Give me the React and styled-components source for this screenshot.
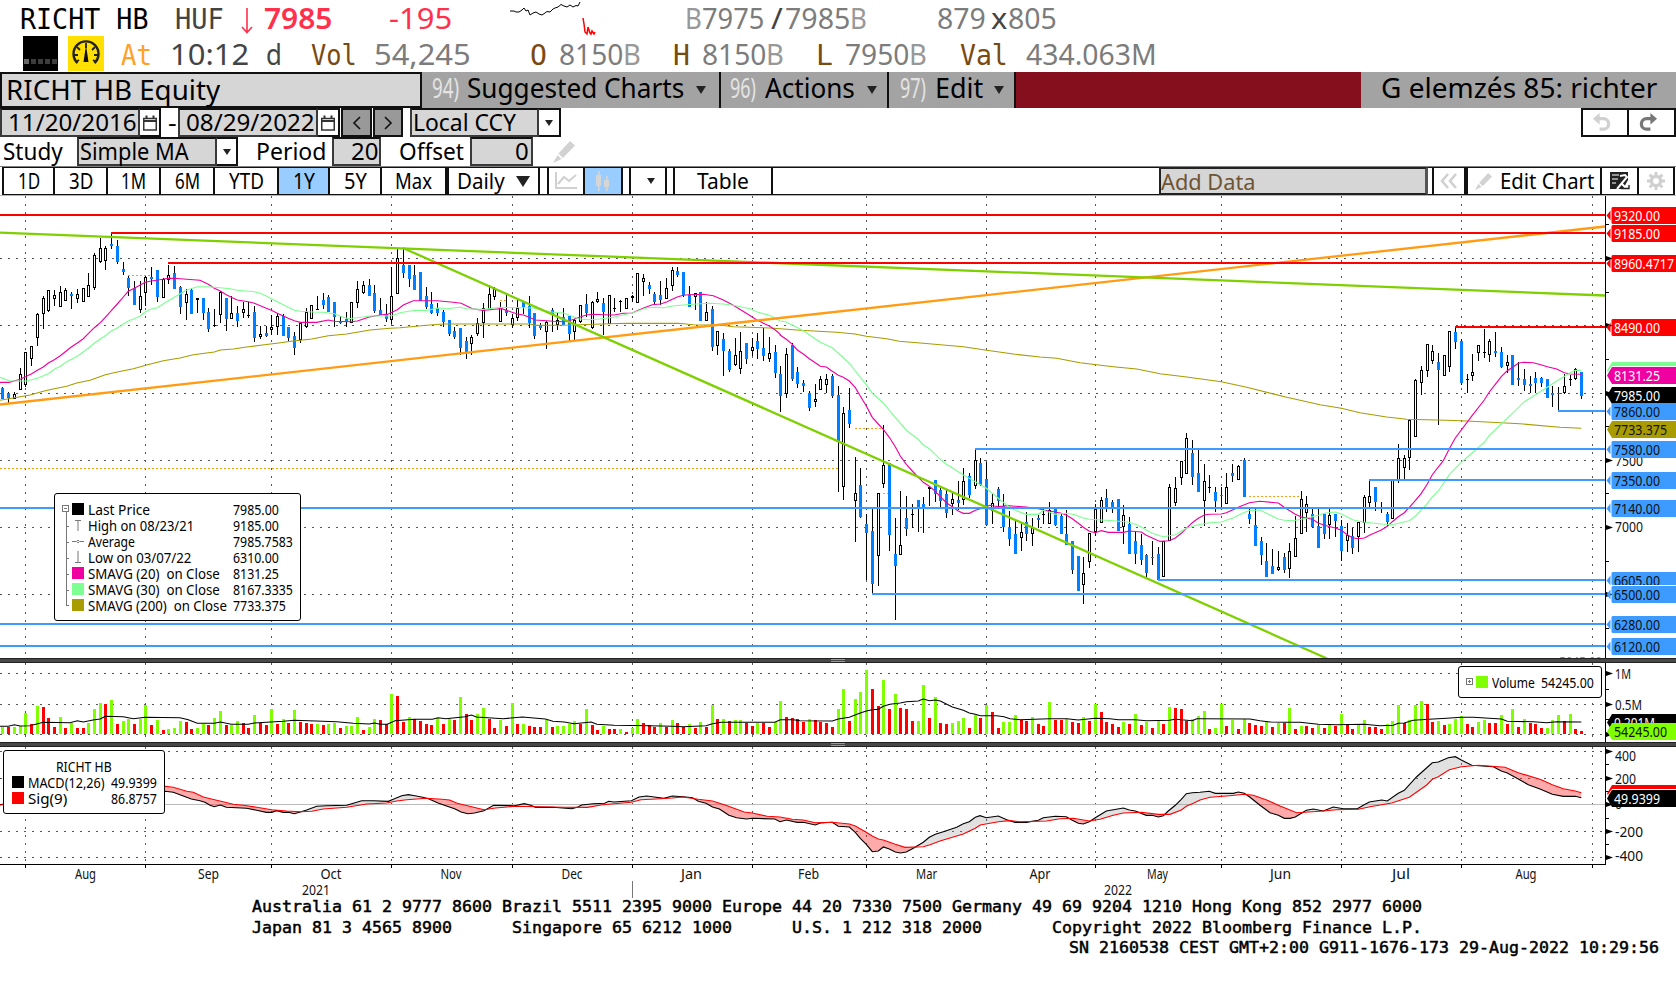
import React, { useLayoutEffect, useRef, useState } from "react";
import styled, { createGlobalStyle, css } from "styled-components";

const UI = '"Noto Sans", "Open Sans", sans-serif';
const MONO = '"DejaVu Sans Mono", "Liberation Mono", monospace';
const C = {
  red: "#ff0000", blue: "#3d9bff", candle: "#0080ff", lime: "#7fd000", orange: "#ff9c14",
  pink: "#f000a0", mint: "#7dff91", olive: "#a89c00", field: "#d6d6d6", menu: "#a3a3a3",
};

const Global = createGlobalStyle`
  html, body { margin: 0; padding: 0; background: #fff; overflow: hidden; }
  * { box-sizing: border-box; }
  svg { display: block; }
`;

const FitBox = styled.span`
  display: inline-block;
  flex: none;
  width: ${(p) => p.$w}px;
  margin-left: ${(p) => p.$gap || 0}px;
  white-space: pre;
  color: ${(p) => p.$color || "inherit"};
  font-weight: ${(p) => (p.$bold ? 600 : "inherit")};
  ${(p) => p.$mono && css`font-family: ${MONO}; font-size: 0.97em;`}
`;
const FitInner = styled.span`
  display: inline-block;
  transform-origin: 0 50%;
`;

/* Condenses a label horizontally so that it fills exactly `w` pixels. */
function Fit({ w, gap, color, bold, mono, children }) {
  const ref = useRef(null);
  const [scale, setScale] = useState(1);
  useLayoutEffect(() => {
    setScale(w / ref.current.offsetWidth);
  }, [w, children]);
  return (
    <FitBox $w={w} $gap={gap} $color={color} $bold={bold} $mono={mono}>
      <FitInner ref={ref} style={{ transform: `scaleX(${scale})` }}>{children}</FitInner>
    </FitBox>
  );
}

const Screen = styled.main`
  width: 1676px;
  height: 991px;
  display: flex;
  flex-direction: column;
  background: #fff;
  color: #000;
  font-family: ${UI};
  overflow: hidden;
`;
const QuoteRow = styled.div`
  display: flex;
  flex: none;
  align-items: baseline;
  height: 36px;
  font-size: 29px;
  line-height: ${(p) => p.$lh}px;
  padding-left: ${(p) => p.$pad}px;
`;
const IconSlot = styled.span`
  flex: none;
  align-self: flex-start;
  width: ${(p) => p.$w}px;
  height: 36px;
  margin-left: ${(p) => p.$gap || 0}px;
`;

const MenuBar = styled.nav`
  display: flex;
  flex: none;
  height: 36px;
  font-size: 27px;
  background: #850f1c;
`;
const SecurityField = styled.div`
  width: 422px;
  border: 2px solid #111;
  background: ${C.field};
  padding-left: 4px;
  font-size: 28px;
  line-height: 30px;
`;
const MenuItem = styled.div`
  display: flex;
  width: ${(p) => p.$w}px;
  padding-left: ${(p) => p.$pad}px;
  background: ${C.menu};
  border-right: ${(p) => (p.$last ? 0 : 2)}px solid #111;
  line-height: 31px;
`;
const Caret = styled.span`
  flex: none;
  align-self: center;
  width: 0;
  height: 0;
  margin-left: ${(p) => p.$gap || 0}px;
  border: ${(p) => p.$s || 5}px solid transparent;
  border-top: ${(p) => (p.$s || 5) * 1.7}px solid #222;
  border-bottom: 0;
`;

const FormRow = styled.div`
  display: flex;
  flex: none;
  align-items: stretch;
  height: 29px;
  font-size: 24px;
  line-height: 27px;
`;
const Field = styled.div`
  display: flex;
  flex: none;
  width: ${(p) => p.$w}px;
  margin-left: ${(p) => p.$gap || 0}px;
  padding-left: ${(p) => p.$pad || 1}px;
  background: ${C.field};
  border: 2px solid #3a3a3a;
  border-top-color: #111;
  line-height: 23px;
`;
const SideButton = styled.div`
  display: flex;
  flex: none;
  align-items: center;
  justify-content: center;
  width: ${(p) => p.$w}px;
  margin-left: ${(p) => p.$gap || 0}px;
  background: ${(p) => p.$bg || "#fff"};
  border: 2px solid #111;
  border-left-width: ${(p) => (p.$joined ? 0 : 2)}px;
`;
const Spacer = styled.div`flex: 1;`;

const ToolRow = styled.div`
  display: flex;
  flex: none;
  height: 30px;
  border-top: 1px solid #808080;
  border-bottom: 1px solid #b4b4b4;
  padding-left: 2px;
  font-size: 21px;
  line-height: 26px;
`;
const Tool = styled.div`
  display: flex;
  flex: none;
  align-items: center;
  justify-content: center;
  width: ${(p) => p.$w}px;
  background: ${(p) => (p.$on ? "#99ccff" : "#fff")};
  border: 1px solid #111;
  border-right-width: 2px;
  border-left-width: ${(p) => (p.$start ? 2 : 0)}px;
`;
const ToolGap = styled.div`
  flex: none;
  width: ${(p) => p.$w}px;
  border-top: 1px solid #111;
  border-bottom: 1px solid #111;
`;
const AddData = styled.div`
  flex: none;
  width: 269px;
  background: ${C.field};
  border: 2px solid #222;
  border-right: 3px solid #555;
  line-height: 25px;
  font-size: 22px;
`;

const Pane = styled.section`
  position: relative;
  flex: none;
  height: ${(p) => p.$h}px;
`;
const Splitter = styled.div`
  flex: none;
  display: flex;
  justify-content: center;
  align-items: center;
  height: 5px;
  background: #484848;
  border-top: 1px solid #222;
  border-bottom: 1px solid #222;
`;
const Grip = styled.span`
  width: 14px;
  height: 3px;
  border-top: 1px solid #999;
  border-bottom: 1px solid #999;
`;
const Legend = styled.div`
  position: absolute;
  left: ${(p) => p.$x}px;
  top: ${(p) => p.$y}px;
  width: ${(p) => p.$w}px;
  height: ${(p) => p.$h}px;
  padding: ${(p) => p.$pad};
  background: #fff;
  border: 1px solid #000;
  border-radius: 3px;
  font-size: 14px;
  line-height: 16px;
`;
const LegendRow = styled.div`
  display: flex;
  align-items: center;
  height: 16px;
`;
const Swatch = styled.span`
  flex: none;
  width: 12px;
  height: 12px;
  margin: -2px 4px 0 ${(p) => p.$gap || 0}px;
  background: ${(p) => p.$c};
`;
const Expander = styled.span`
  flex: none;
  width: 7px;
  height: 7px;
  margin-top: -3px;
  background: linear-gradient(#777, #777) center / 3px 1px no-repeat,
    ${(p) => (p.$plus ? "linear-gradient(#777,#777) center / 1px 3px no-repeat" : "none")};
  border: 1px solid #777;
`;
const Footer = styled.footer`
  flex: none;
  height: 91px;
  margin-top: -3px;
  font: 16.62px/20.5px ${MONO};
  -webkit-text-stroke: 0.5px #000;
  white-space: pre;
`;
const FooterLine = styled.div`padding-left: ${(p) => p.$pad}px;`;

/* ---- market data, in thirds of a pixel relative to each block's origin:
   x, kind, wick top, body top, body bottom, wick bottom ---- */
const CANDLES = [
  [0, 195, `7b576,578,613,613 25b591,595,610,627 43w590,597,613,613 61w519,537,586,586 76w470,471,570,575 94w453,454,491,513 112w354,356,428,453 130w303,310,358,402 145w285,286,348,350 163w285,300,311,333 181w272,291,335,335 196w279,286,317,319 214b291,297,303,342 232w282,297,311,323 250w280,280,322,322 265w234,270,305,305 283w174,180,278,285 301w128,159,200,204 316w153,159,198,224 334b114,147,153,162 352b135,153,201,207 370b201,222,232,240 385b242,249,279,302 403b258,279,329,329 421w258,303,345,354 436w243,246,293,333 454b216,246,252,270 472b225,225,305,321 490w250,252,308,308 505w210,240,255,267 523b213,234,282,282 541b273,276,336,357 559w282,297,323,375 574b279,284,357,357 592w309,310,315,354 610b309,309,354,375 625b339,350,402,411 643w342,390,391,396 661w288,291,360,384 679b309,309,372,408 694w303,355,371,371 712b333,354,378,396 730w321,342,353,369 745w321,360,361,369 763b333,350,429,441 781w393,416,426,432 799b393,414,423,426 814w360,396,406,420 832w354,364,396,420 850b357,363,423,423 865b396,396,429,438 883b411,423,459,480 901w381,384,434,444 919w339,352,397,399 934w330,331,371,371 952w303,342,346,346 970b293,315,330,342 985b300,306,350,350 1003b321,321,366,396 1021b363,378,384,387 1039b350,372,381,396 1054w321,322,383,383 1072w258,282,323,339 1090w258,270,293,297 1108b252,270,302,302 1123b270,293,347,354 1141b309,345,359,359 1159b327,357,372,381 1174w216,303,374,387 1192w162,190,296,296 1210b162,210,234,249 1228b210,210,252,276 1243b210,240,285,285`],
  [400, 195, `61b231,231,317,317 79b276,303,336,341 94b291,327,354,357 112b324,339,353,363 130b345,351,381,396 148b375,375,417,423 163b396,408,426,432 181b399,399,459,480 199b426,438,474,492 214w420,427,446,480 232w369,384,416,423 250w324,340,385,429 268w270,297,341,342 283w276,283,306,315 301w321,336,380,380 319b300,345,354,363 337w357,370,391,399 352w315,340,368,378 370b318,318,336,357 388b303,333,384,399 403b354,354,423,432 421b384,391,399,405 439w378,382,410,462 457b339,345,359,411 472w354,376,389,405 490b339,366,390,390 508b363,363,417,438 523w372,376,412,438 541w330,331,380,384 559b297,327,354,366 577w317,322,400,403 592w291,313,320,324 610b309,324,350,420 628w300,301,388,388 643w309,339,341,351 661w316,317,318,350 679w309,310,341,341 697w300,302,308,321 712w234,235,323,323 730w237,250,260,303 748b261,270,282,297 763b291,297,321,327 781b258,300,315,329 799w249,280,311,312 817w216,225,272,287 832b216,228,240,246 850b231,231,300,305 868b273,300,335,335 886w294,295,305,345 901b291,291,377,377 919w321,352,377,378 937b333,342,456,468 952w408,409,452,480 970b414,432,468,543 988b462,468,525,530 1006w429,481,509,513 1021w411,469,521,537 1039b444,444,492,507 1057w429,457,469,483 1072b414,438,462,492 1090b399,459,483,498 1108w426,475,491,501 1126b450,471,534,549 1141b513,537,603,651 1159w459,478,596,609 1177b444,450,552,558 1192b516,531,567,579 1210b555,564,573,592 1228b588,594,639,648 1246w567,613,620,636`],
  [780, 300, `121w228,238,269,270 139w222,238,254,279 157b222,228,288,294 175b258,285,423,576 190w321,340,562,600 208b264,330,372,384 226w471,580,602,726 241b504,555,651,655 259b642,672,699,840 277b627,693,852,880 295w579,580,769,858 310w375,496,551,564 328b490,490,705,753 346b654,762,798,960 361w573,736,765,765 379b588,654,687,708 397w612,642,643,684 415b600,600,625,696 430b591,612,624,699 448w561,562,566,618 466b540,540,582,606 481b558,570,603,621 499b570,582,640,655 517w579,598,613,645 535b543,600,609,630 550w504,544,599,615 568b519,528,585,594 586w450,481,557,567 601b474,489,555,558 619b486,537,675,678 637w582,610,634,672 655b561,567,603,625 670b582,618,681,696 688b633,681,717,738 706b663,702,762,762 724w669,697,715,753 739b636,666,702,723 757w654,684,701,738 775b645,654,660,684 790w624,643,644,672 808w606,629,671,672 826b624,627,675,678 844b640,648,702,702 859b630,702,735,735 877b723,723,810,822 895b768,768,873,873 910w771,820,854,912 928w699,700,785,804 946w612,626,695,708 964w591,601,668,668 979b567,594,624,636 997b600,606,624,639 1015b597,597,693,693 1030w615,646,682,732 1048b651,672,762,762 1066b693,723,762,792 1084b702,735,780,795 1099b762,765,819,831 1117b723,771,774,795 1135b741,762,840,840 1150w723,724,830,830`],
  [1160, 300, `28w552,562,724,724 46w531,565,608,618 64w483,484,533,555 79w399,415,521,522 97b420,459,531,555 115b450,519,576,576 133w492,544,602,678 148w525,562,563,579 166b561,575,603,636 184b561,585,588,624 199w519,562,611,612 217b492,519,528,546 235w495,499,539,540 253b474,480,591,591 268b624,642,657,672 286b624,675,738,738 304b711,723,765,795 319b729,783,831,831 337b747,798,822,822 355w753,802,811,813 373b759,771,810,819 388w729,754,806,834 406w648,715,770,770 424w573,598,701,702 439w588,613,638,696 457b627,642,681,684 475b624,678,744,744 493b642,642,702,717 508w627,646,674,717 526b642,642,663,711 544b660,678,753,783 562w669,706,724,756 577b684,708,744,762 595w666,667,712,756 613w585,592,668,699 628w543,589,608,621 646b561,561,606,633 664w606,622,623,640 682b636,642,666,678 697w540,541,656,656 715w432,475,542,549 733w465,475,503,537 748w357,360,475,510 766w237,240,410,411 784w198,211,248,285 802w132,133,212,230 817w135,154,182,192 835b159,186,210,375 853w165,166,227,227 868w93,94,200,215 886b80,96,126,147 904b117,123,249,255 922w222,237,239,279 937w162,217,227,242 955w135,136,160,182 973w87,156,157,174 988w117,124,166,186 1006b96,153,159,171 1024b141,156,201,204 1042w165,187,199,219 1057b165,165,255,255 1075b186,234,240,258 1093b207,237,255,273 1111b228,252,258,279 1126b216,234,249,279 1144b231,234,249,261 1162b237,237,294,294 1177b258,279,285,321 1195b261,279,282,333 1213w222,259,280,282 1231w225,237,239,258 1246w204,206,238,240 1264b216,216,288,297`],
].flatMap(([ox, oy, s]) =>
  s.split(" ").map((t) => {
    const [, x, kind, rest] = t.match(/^(\d+)([bw])(.*)$/);
    const [wt, bt, bb, wb] = rest.split(",").map((v) => Math.round(oy + v / 3));
    return { x: ox + Math.round((x - 1) / 3), up: kind === "w", wt, bt, bb, wb };
  })
);

const VOLUMES = [
  [762, `g741 r741 g741 g739 g699 r732 g678 r681 r714 r741 g711 r744 g729 r744 r744 g729 g687 g669 r672 g660 r732 g723 g717 r732 g717 g675 r735 g720 r750 g747 g744 g723 r726 r747 g744 g732 r735 g714 g693 r735 g735 g723 r729 r744 g705 r729 r735 g687 r732 g717 r729 g690 r726 r729 r732 g732 r735 g732 g729 r744 g738 g738 g711 r750 g741 g717 r720 r732 g642 r648 r726 g711 r718`],
  [282, `r243 r252 r255 g234 r252 g237 r240 g171 r222 r240 g222 g204 r237 r264 g240 r258 g189 r252 g252 r258 r261 r261 g240 r261 g258 g258 g252 g243 r252 g207 r255 r270 g258 r267 r267 g267 r276 g264 g237 r249 r255 r261 g249 r261 g240 r249 r261 g252 r264 g246 r261 g195 r237 g237 r243 g240 g240 r249 r258 g249 r249 r261 g246`],
  [252, `g153 r201 r204 r207 r216 g207 r210 r216 r219 r231 g177 g117 r213 g147 g126 g60 r117 r168 g90 r177 g132 r174 r177 r213 g213 g105 r204 g141 r219 r222 g219 g213 g204 r234 g195 r204 g165 r186 r234 g216 g216 g195 r210 r213 g201 r222 r228 g156 r210 r210 g207 r216 r219 g201 r213 g162 r186 r216 r222 r231 g216 r222 g192 r225 g216 r234 g213 r222 g171 r174 r177 r213 g207 g198 g183 r237 g234 g162 r228 g210 r237 g207 r219 r225 r228 g213 r231 g219 r219 g174 r237 g228 r228 r234 g225 r234 g222 r228 g192 r222 r237 g225 g210 r231 r231 r237 g222 g213 g165 r219 g210 g165 g153 r162 r216 g213 r225 g222 g207 g198 r222 r231 g216 g210 r219 r219 g195 r222 g177 r231 g207 r219 r222 r234 g234 g210 g195 r213 g192 r237 r243`],
].flatMap(([base, s]) => s.split(" ").map((t) => ({ up: t[0] === "g", h: Math.round((base - t.slice(1)) / 3) })));

/* Decodes "x,y x,y ..." blocks given an origin and scale per block. */
const curve = (blocks) =>
  blocks.flatMap(([ox, oy, s, sx = 3]) =>
    s.split(" ").map((p) => {
      const [x, y] = p.split(",").map(Number);
      return [ox + x / sx, oy + y / 3];
    })
  );
const NARROW = 1568 / 600;
const pts = (a) => a.map(([x, y]) => `${x.toFixed(1)},${y.toFixed(1)}`).join(" ");

const SMA20 = curve([
  [0, 195, "0,562 27,562 45,557 61,553 76,545 94,537 112,526 130,516 145,504 163,494 181,482 196,470 214,456 232,444 250,431 265,416 283,398 301,383 316,367 334,347 352,327 370,306 385,289 403,280 421,270 436,262 454,258 475,255 505,250 523,250 560,253 600,256 625,268 643,280 661,288 679,299 694,307 712,315 745,320 763,325 781,332 799,340 814,346 832,355 850,363 865,370 883,377 901,382 950,382 985,375 1003,379 1054,380 1072,378 1090,372 1108,366 1141,360 1165,357 1192,344 1210,330"],
  [400, 195, "40,317 112,317 160,322 184,325 199,332 217,341 250,346 283,343 305,341 325,348 352,357 370,360 388,367 406,375 439,377 460,379 490,380 517,374 541,366 559,360 580,358 610,359 643,360 670,355 697,354 715,346 733,338 757,329 781,327 800,321 817,313 832,306 850,301 868,299 910,298 940,302 970,315 1000,331 1039,355 1072,376 1108,393 1126,405 1141,418"],
  [780, 300, "0,105 19,118 37,133 52,150 70,162 88,176 106,188 121,199 139,201 157,214 175,226 190,232 208,243 226,263 241,288 259,318 277,352 295,372 310,388 328,412 346,440 361,468 379,493 397,513 415,532 430,547 448,559 466,574 481,590 499,608 517,620 535,633 550,640 568,640 586,631 601,626 630,616 655,620 680,617 706,619 739,621 775,626 790,630 826,636 844,640 859,645 877,656 895,670 910,682 928,694 946,698 964,692 985,697 1030,697 1048,693 1084,696 1099,706 1117,714 1135,722"],
  [1160, 300, "0,724 28,722 46,714 64,700 79,685 97,668 115,655 133,645 148,643 184,642 199,638 235,622 268,608 300,604 355,609 373,622 406,643 424,651 457,658 475,669 493,676 526,684 544,691 562,704 577,713 595,716 613,714 630,705 664,690 682,679 697,665 715,650 733,638 748,622 766,602 784,580 802,552 817,524 850,482 868,446 886,414 937,346 973,300 988,276 1006,253 1024,230 1040,214 1060,200 1075,190 1090,187 1120,188 1145,195 1162,200 1190,207 1213,218 1231,222 1264,223"],
]);
const SMA30 = curve([
  [0, 195, "0,547 12,551 27,557 45,558 80,558 112,550 145,536 163,523 181,514 200,500 232,484 265,460 283,445 301,432 316,422 334,408 352,399 385,378 403,371 421,363 436,350 454,342 472,338 490,326 523,307 541,296 559,286 592,275 625,275 661,278 690,281 712,286 763,290 781,295 799,303 832,320 865,337 883,346 901,349 940,351 970,352 1003,356 1021,364 1045,371 1090,366 1108,363 1170,363 1192,357"],
  [400, 195, "0,353 45,346 80,346 115,339 140,341 180,337 200,341 250,343 300,337 400,339 425,345 460,352 490,354 515,363 535,371 565,374 600,372 640,367 679,358 697,354 730,342 748,337 790,338 817,333 850,330 890,327 930,325 970,327 1000,331 1050,341 1072,351 1108,361 1126,370"],
  [780, 300, "0,63 15,65 37,75 70,92 121,127 157,143 190,173 208,190 226,213 259,254 277,280 310,309 346,353 379,390 397,405 415,418 430,435 448,446 481,478 499,493 517,503 550,525 568,535 586,545 619,565 655,595 688,622 706,631 739,643 775,643 790,631 808,637 826,643 859,640 885,644 910,654 928,658 1000,662 1048,667 1066,673 1084,681 1099,690 1117,700"],
  [1160, 300, "0,707 10,710 46,704 79,685 115,674 148,668 184,666 217,655 250,638 268,632 300,630 330,645 355,657 373,661 400,662 439,655 475,646 493,640 526,636 544,642 580,660 610,666 664,672 697,674 748,662 770,645 802,610 817,591 835,573 868,524 904,487 937,458 973,427 988,406 1024,372 1060,338 1093,305 1130,282 1162,262 1195,240 1231,218 1246,211 1264,211"],
]);
const SMA200 = curve([
  [0, 195, "0,616 40,609 90,600 130,589 163,581 200,574 230,564 270,556 316,539 352,531 400,521 440,510 490,497 540,489 580,479 643,471 661,465 700,462 740,456 781,451 830,445 880,438 935,432 985,422 1040,417 1110,405 1170,400"],
  [400, 195, "0,398 80,391 130,387 390,387 405,391 520,390 580,388 680,385 835,385 880,389 960,390 1000,395 1110,399"],
  [780, 300, "0,86 60,91 170,97 225,102 259,109 320,116 358,124 430,130 550,140 620,151 700,162 780,171 830,175 900,188 1000,200 1070,207"],
  [1160, 300, "0,221 80,231 184,245 260,262 380,292 480,314 544,325 600,338 680,351 740,358 860,361 920,363 1080,371 1200,382 1264,385"],
]);
const VOLMA = curve([
  [0, 480, "0,739 25,739 43,734 60,738 90,737 130,727 210,728 232,722 250,726 283,719 301,717 316,709 370,710 400,716 436,712 540,713 565,719 592,730 643,730 661,726 694,733 745,733 763,729 850,724 883,721 1010,725 1060,730 1108,732 1123,729 1141,733 1162,733 1185,722 1243,718"],
  [220, 640, "555,238 570,233 590,236 640,230 657,225 670,231 740,236 790,231 850,237 870,244 900,246 925,251 970,246 985,253 1030,256 1120,257 1182,259 1211,260 1270,257 1287,251 1310,247 1450,247", NARROW],
  [780, 650, "1,209 40,209 60,212 157,213 175,207 208,202 241,189 259,183 277,179 295,178 310,169 330,163 361,159 379,155 415,153 430,147 448,152 466,150 481,153 517,171 550,181 568,189 586,193 601,197 650,197 672,200 690,206 720,209 808,206 860,206 895,210 946,205 990,206 1015,209 1066,209 1099,212 1168,211 1186,208 1237,212 1250,206"],
  [1200, 650, "0,206 150,207 180,212 210,216 260,217 300,217 355,223 410,224 493,223 540,227 580,226 595,220 613,219 640,211 700,207 740,205 784,202 820,202 904,207 922,214 1000,215 1040,218 1070,215 1144,216"],
]);
const MACD = curve([
  [0, 480, "0,974 495,934 520,937 550,948 574,957 600,962 615,967 630,976 643,980 661,975 679,982 740,985 770,991 799,997 815,997 830,992 850,997 865,997 883,1001 901,996 920,990 950,979 980,977 1040,976 1055,971 1085,962 1120,962 1165,964 1180,958 1205,947 1225,944"],
  [220, 640, "509,467 530,472 545,476 570,489 590,497 613,506 630,516 648,521 665,519 690,512 715,496 770,497 795,491 812,496 825,502 870,502 920,506 935,501 945,495 975,491 1005,490 1016,484 1030,486 1075,482 1095,471 1115,468 1135,471 1160,475 1182,468 1211,470 1235,473 1250,484 1270,490 1287,501 1305,507 1330,526 1350,533 1376,537 1391,535 1450,537", NARROW],
  [780, 650, "0,515 19,510 52,517 70,517 106,525 121,519 157,517 175,529 208,531 226,547 241,565 259,583 277,605 295,603 310,591 328,597 346,606 361,609 379,606 400,595 430,577 448,562 466,553 490,545 530,532 550,521 568,515 586,502 600,497 619,503 655,498 680,509 705,517 739,517 775,511 790,503 826,499 859,500 877,511 895,520 910,522 928,515 946,503 979,483 1030,474 1048,480 1066,483 1099,496 1117,496 1135,501 1150,497 1165,483 1186,466 1204,448 1219,431 1237,428"],
  [1200, 650, "0,427 28,424 46,430 100,430 115,426 133,430 150,442 180,466 210,488 235,496 253,505 270,505 286,501 319,481 340,477 370,483 400,471 430,476 472,476 490,466 508,456 545,450 562,453 595,430 613,421 650,380 697,338 715,336 745,323 766,320 784,330 815,346 880,350 904,363 922,369 955,387 985,404 1020,417 1057,433 1090,439 1126,439 1144,443"],
]);
const SIGNAL = curve([
  [0, 480, "0,975 495,919 520,922 560,934 580,937 610,951 650,961 700,973 730,976 770,982 815,989 860,993 900,995 935,994 970,987 1040,982 1100,972 1160,969 1190,963 1220,959"],
  [220, 640, "540,475 580,478 600,480 620,490 660,501 690,509 720,504 770,499 900,502 960,502 1000,494 1075,487 1100,479 1140,477 1182,474 1209,471 1250,478 1287,483 1320,495 1370,516 1391,519 1430,529", NARROW],
  [780, 650, "0,501 37,508 70,510 106,518 157,517 208,522 226,528 259,547 277,558 295,567 310,570 346,583 375,592 430,590 450,584 480,573 550,552 570,542 586,535 601,525 655,515 688,512 720,515 800,513 840,506 880,505 928,513 960,508 1000,496 1030,489 1084,487 1135,493 1170,493 1204,480 1219,469 1240,460"],
  [1200, 650, "0,450 30,442 80,438 133,433 160,436 200,450 240,468 270,480 290,488 360,484 410,479 475,478 510,470 575,459 628,442 680,405 697,388 715,380 748,359 784,350 835,346 915,352 955,368 1024,389 1057,404 1090,416 1126,423 1144,428"],
]);

const yAt = (line, x) => {
  for (let i = 1; i < line.length; i++) {
    if (line[i][0] >= x) {
      const [x0, y0] = line[i - 1];
      const [x1, y1] = line[i];
      return y0 + ((y1 - y0) * (x - x0)) / (x1 - x0 || 1);
    }
  }
  return line[line.length - 1][1];
};
const band = (pick) => {
  const top = [], bottom = [];
  for (let x = 1; x <= 1581; x += 2) {
    const m = yAt(MACD, x), s = yAt(SIGNAL, x);
    top.push([x, s]);
    bottom.unshift([x, pick(m, s)]);
  }
  return pts([...top, ...bottom]);
};

const MONTHS = [25, 145, 271, 391, 512, 632, 752, 866, 986, 1095, 1221, 1341, 1461, 1592];
const AXIS = 1605;

function Grid({ y0, y1, rows }) {
  return (
    <g stroke="#555" strokeWidth="1" strokeDasharray="2 6" shapeRendering="crispEdges">
      {MONTHS.map((x) => <line key={x} x1={x + 0.5} x2={x + 0.5} y1={y0} y2={y1} />)}
      {rows.map((y) => <line key={y} x1="0" x2={AXIS} y1={y + 0.5} y2={y + 0.5} />)}
    </g>
  );
}

function AxisTicks({ y0, y1, major, minor }) {
  return (
    <g fill="#000" shapeRendering="crispEdges">
      <rect x={AXIS} y={y0} width="1" height={y1 - y0} />
      {minor.map((y) => <rect key={y} x={AXIS} y={y} width="4" height="1" />)}
      {major.map((y) => <path key={y} d={`M1606 ${y - 2}L1613 ${y + 0.5}L1606 ${y + 3}Z`} shapeRendering="auto" />)}
    </g>
  );
}

function AxisText({ y, w, x = 1614, fill = "#111", anchor, children }) {
  return (
    <text x={x} y={y} fontFamily={UI} fontSize="13.8" fill={fill} textAnchor={anchor} textLength={w} lengthAdjust="spacingAndGlyphs">{children}</text>
  );
}

function Tag({ y, fill, ink = "#111", h = 17, wide, w = 46, children }) {
  return (
    <g>
      {wide
        ? <path d={`M1607 ${y + 8.5}L1612 ${y}H1676V${y + h}H1612Z`} fill={fill} />
        : <path d={`M1612.5 ${y}H1676V${y + h}H1612.5L1611.5 ${y + h - 1}V${y + 1}ZM1606.5 ${y + 8.5}L1610.5 ${y + 3.5}V${y + 13.5}Z`} fill={fill} />}
      {children && (
        <>
          <clipPath id={`tag${y}`}><rect x="1606" y={y} width="70" height={h} /></clipPath>
          <g clipPath={`url(#tag${y})`}><AxisText y={y + 14} w={w} fill={ink}>{children}</AxisText></g>
        </>
      )}
    </g>
  );
}

const LEVELS = [
  [C.red, 0, 215], [C.red, 111, 233], [C.red, 168, 263], [C.red, 1455, 327],
  [C.blue, 0, 508], [C.blue, 0, 624], [C.blue, 0, 646], [C.blue, 975, 449],
  [C.blue, 1369, 480], [C.blue, 1558, 411], [C.blue, 1158, 580], [C.blue, 872, 594],
];
const GAPS = [[128, 150, 275], [500, 507, 300], [855, 883, 428], [0, 838, 468], [883, 889, 493], [1249, 1299, 496]];

function PriceChart() {
  return (
    <svg width="1676" height="462" viewBox="0 196 1676 462">
      <Grid y0={196} y1={658} rows={[258, 325, 393, 460, 527, 594]} />
      <g shapeRendering="crispEdges">
        {GAPS.map(([a, b, y]) => <line key={y} x1={a} x2={b} y1={y + 0.5} y2={y + 0.5} stroke={C.orange} strokeDasharray="2 2" />)}
        {CANDLES.map((c) => (
          <g key={c.x}>
            <rect x={c.x} y={c.wt} width="1" height={Math.max(1, c.wb - c.wt)} fill="#000" />
            <rect x={c.x - 1} y={c.bt} width="3" height={Math.max(1, c.bb - c.bt)} fill={c.up ? "#000" : C.candle} />
            {c.up && c.bb - c.bt > 2 && <rect x={c.x} y={c.bt + 1} width="1" height={c.bb - c.bt - 2} fill="#fff" />}
          </g>
        ))}
      </g>
      <g fill="none" strokeWidth="1.15">
        <polyline points={pts(SMA200)} stroke={C.olive} />
        <polyline points={pts(SMA20)} stroke={C.pink} />
        <polyline points={pts(SMA30)} stroke={C.mint} />
      </g>
      <g strokeWidth="2.3">
        <line x1="0" y1="404.5" x2="1605" y2="226.5" stroke={C.orange} />
        <line x1="0" y1="232.7" x2="1605" y2="295.5" stroke={C.lime} />
        <line x1="403" y1="248" x2="1327" y2="658.5" stroke={C.lime} />
      </g>
      <g strokeWidth="2">
        {LEVELS.map(([c, x, y]) => <line key={y} x1={x} x2={AXIS} y1={y} y2={y} stroke={c} />)}
      </g>
      <AxisTicks y0={196} y1={658} major={[258, 325, 393, 460, 527, 594]} minor={[224, 292, 359, 426, 493, 561, 628]} />
      <AxisText y={466} w={28} x={1615}>7500</AxisText>
      <AxisText y={532} w={28} x={1615}>7000</AxisText>
      <Tag y={207} fill={C.red} ink="#fff">9320.00</Tag>
      <Tag y={225} fill={C.red} ink="#fff">9185.00</Tag>
      <Tag y={255} fill={C.red} ink="#fff" w={60}>8960.4717</Tag>
      <Tag y={319} fill={C.red} ink="#fff">8490.00</Tag>
      <Tag y={362} fill={C.mint} wide />
      <path d="M1606 375L1612 366.5H1676" fill="none" stroke="#fff" />
      <Tag y={367} fill={C.pink} ink="#fff" wide>8131.25</Tag>
      <Tag y={387} fill="#000" ink="#fff" wide>7985.00</Tag>
      <Tag y={403} fill={C.blue}>7860.00</Tag>
      <Tag y={421} fill={C.olive} wide w={53}>7733.375</Tag>
      <Tag y={441} fill={C.blue}>7580.00</Tag>
      <Tag y={472} fill={C.blue}>7350.00</Tag>
      <Tag y={500} fill={C.blue}>7140.00</Tag>
      <Tag y={572} fill={C.blue} h={13}>6605.00</Tag>
      <Tag y={586} fill={C.blue}>6500.00</Tag>
      <Tag y={616} fill={C.blue}>6280.00</Tag>
      <Tag y={638} fill={C.blue}>6120.00</Tag>
      <AxisText y={667} w={43} x={1559} fill="#18a8f0">5945.00</AxisText>
    </svg>
  );
}

function VolumeChart() {
  return (
    <svg width="1676" height="79" viewBox="0 663 1676 79">
      <Grid y0={663} y1={742} rows={[673, 704, 734]} />
      <g shapeRendering="crispEdges">
        {VOLUMES.map((v, i) => CANDLES[i] && (
          <rect key={i} x={CANDLES[i].x - 1} y={734 - v.h} width="3" height={v.h} fill={v.up ? "#80ff00" : C.red} />
        ))}
      </g>
      <polyline points={pts(VOLMA)} fill="none" stroke="#000" strokeWidth="1.1" />
      <AxisTicks y0={663} y1={742} major={[673, 704, 734]} minor={[689, 719]} />
      <AxisText y={679} w={16} x={1615}>1M</AxisText>
      <AxisText y={710} w={27} x={1615}>0.5M</AxisText>
      <Tag y={714} fill="#000" ink="#fff" wide w={41}>0.201M</Tag>
      <Tag y={723} fill="#80ff00" wide w={53}>54245.00</Tag>
    </svg>
  );
}

const MONTH_LABELS = [["Aug", 85.5], ["Sep", 208.5], ["Oct", 331], ["Nov", 451], ["Dec", 572], ["Jan", 691.5], ["Feb", 808.5], ["Mar", 926.5], ["Apr", 1040], ["May", 1157.5], ["Jun", 1280.5], ["Jul", 1401], ["Aug", 1526]];

function MacdChart() {
  return (
    <svg width="1676" height="153" viewBox="0 747 1676 153">
      <Grid y0={747} y1={864} rows={[751, 778, 831, 857]} />
      <rect x="0" y="804" width={AXIS} height="1" fill="#bbb" />
      <polygon points={band((m, s) => Math.max(m, s))} fill="#ff2020" fillOpacity="0.38" />
      <polygon points={band((m, s) => Math.min(m, s))} fill="#888" fillOpacity="0.25" />
      <g fill="none" strokeWidth="1.15">
        <polyline points={pts(MACD)} stroke="#000" />
        <polyline points={pts(SIGNAL)} stroke={C.red} />
      </g>
      <g shapeRendering="crispEdges">
        <rect x="0" y="864" width="1606" height="1" />
        {MONTHS.map((x) => <rect key={x} x={x} y="864" width="1" height="4" />)}
        <rect x="632" y="881" width="1" height="17" fill="#777" />
      </g>
      <AxisTicks y0={747} y1={865} major={[751, 778, 804, 831, 857]} minor={[764, 791, 818, 844]} />
      <AxisText y={761} w={21} x={1615}>400</AxisText>
      <AxisText y={784} w={21} x={1615}>200</AxisText>
      <AxisText y={809} w={7} x={1615}>0</AxisText>
      <AxisText y={837} w={28} x={1615}>-200</AxisText>
      <AxisText y={861} w={28} x={1615}>-400</AxisText>
      <Tag y={785} fill={C.red} wide />
      <path d="M1606 798.5L1612 789.5H1676" fill="none" stroke="#fff" />
      <Tag y={790} fill="#000" ink="#fff" wide>49.9399</Tag>
      {MONTH_LABELS.map(([m, x]) => <AxisText key={x} x={x} y={879} w={m === "Jul" ? 18 : 21} anchor="middle">{m}</AxisText>)}
      <AxisText x={316} y={895} w={28} anchor="middle">2021</AxisText>
      <AxisText x={1118} y={895} w={28} anchor="middle">2022</AxisText>
    </svg>
  );
}

function Pencil({ size = 22 }) {
  return (
    <svg width={size} height={size} viewBox="0 0 22 22" fill="#d2d2d2">
      <path d="M17 0L22 4.5L10 17L5.5 12.5ZM4.5 14L8.5 18L0 22Z" />
    </svg>
  );
}
function Calendar() {
  return (
    <svg width="14" height="16" viewBox="0 0 14 16" fill="none" stroke="#333">
      <rect x="0.75" y="3.5" width="12.5" height="11.5" strokeWidth="1.5" />
      <path d="M1 6H13M3.5 0.5V4M10.5 0.5V4" strokeWidth="2" />
    </svg>
  );
}
const TurnIcon = styled.svg`
  margin-right: 7px;
`;
function Turn({ color, flip }) {
  return (
    <TurnIcon width="19" height="19" viewBox="0 0 20 20">
      <g transform={flip ? "translate(20 0) scale(-1 1)" : undefined}>
        <path d="M6 6H12A5 5 0 0 1 12 17H8" fill="none" stroke={color} strokeWidth="3.4" />
        <path d="M1 6L8 0V12Z" fill={color} />
      </g>
    </TurnIcon>
  );
}
function Gear() {
  return (
    <svg width="18" height="18" viewBox="-9 -9 18 18">
      <circle r="4.6" fill="none" stroke="#d0d0d0" strokeWidth="3.2" />
      {[0, 45, 90, 135].map((a) => <path key={a} d="M0 -9V-5M0 5V9" stroke="#d0d0d0" strokeWidth="3" transform={`rotate(${a})`} />)}
    </svg>
  );
}

const LEGEND = [
  ["#000", "Last Price", 62, "7985.00", 46],
  ["high", "High on 08/23/21", 106, "9185.00", 46],
  ["avg", "Average", 47, "7985.7583", 60],
  ["low", "Low on 03/07/22", 103, "6310.00", 46],
  [C.pink, "SMAVG (20)  on Close", 132, "8131.25", 46],
  [C.mint, "SMAVG (30)  on Close", 132, "8167.3335", 60],
  [C.olive, "SMAVG (200)  on Close", 139, "7733.375", 53],
];
const MARKS = { high: "M3 1.5H9M6 1.5V12", low: "M3 11.5H9M6 0V11.5", avg: "M0 6.5H4M8 6.5H12M4.5 6.5L6 5L7.5 6.5L6 8Z" };
const LegendTree = styled.svg`
  position: absolute;
  left: 7px;
  top: 11px;
`;
const Mark = styled.svg`
  flex: none;
  margin: -2px 4px 0 0;
`;

export default function App() {
  const gray = "#7c7c7c", pale = "#989898", dark = "#444", brown = "#7a4a12", hot = "#ff304c";
  return (
    <Screen>
      <Global />
      <QuoteRow $pad={20} $lh={35}>
        <Fit w={128} mono>RICHT HB</Fit>
        <Fit w={49} gap={27} mono color={dark}>HUF</Fit>
        <IconSlot $w={12} $gap={17}>
          <svg width="12" height="36" fill="none" stroke={hot} strokeWidth="1.6"><path d="M6 8V32M1 27L6 32.5L11 27" /></svg>
        </IconSlot>
        <Fit w={68} gap={11} bold color={hot}>7985</Fit>
        <Fit w={63} gap={57} color={hot}>-195</Fit>
        <IconSlot $w={90} $gap={57}>
          <svg width="90" height="36" viewBox="509 0 90 36" fill="none">
            <path stroke="#000" d="M510 11H514L516 12H519L522 10L524 8L526 11L528 10L530 15L533 13L536 12L539 14L542 15L545 13L547 11.5L550 12L553 9L555 8L558 7L561 4.5L564 6L567 7L570 5L573 7L576 5.5L578 6L580 2" />
            <path stroke="#f00" strokeWidth="1.5" d="M583 18L584 24L585 32L587 34L588 27L590 33L591 34L592 31L594 34L595 32" />
          </svg>
        </IconSlot>
        <Fit w={17} gap={86} color={pale}>B</Fit>
        <Fit w={62} color={gray}>7975</Fit>
        <Fit w={12} gap={7} color={dark}>/</Fit>
        <Fit w={65} gap={2} color={gray}>7985</Fit>
        <Fit w={17} color={pale}>B</Fit>
        <Fit w={49} gap={70} color={gray}>879</Fit>
        <Fit w={16} gap={5} color={dark}>x</Fit>
        <Fit w={49} gap={1} color={gray}>805</Fit>
      </QuoteRow>
      <QuoteRow $pad={23} $lh={36}>
        <IconSlot $w={35}>
          <svg width="35" height="35"><rect width="35" height="35" fill="#000" />
            {[0, 7, 14, 21, 28].map((x) => <rect key={x} x={x + 1} y="23" width="5" height="5" fill={x ? "#3c3c3c" : "#666"} />)}
          </svg>
        </IconSlot>
        <IconSlot $w={36} $gap={10}>
          <svg width="36" height="35" viewBox="0 0 36 35"><rect width="36" height="35" fill="#ffe000" />
            <path d="M9.5 27A12.5 12.5 0 1 1 26.5 27" fill="none" stroke="#222" strokeWidth="2.4" />
            <path d="M18 7V12M9 11L12 14M27 11L24 14M5 19H10M31 19H26M8 26L11 24M28 26L25 24" stroke="#222" strokeWidth="1.8" />
            <path d="M18 9L20.5 26H15.5Z" fill="#111" />
          </svg>
        </IconSlot>
        <Fit w={31} gap={17} mono color="#ffa028">At</Fit>
        <Fit w={79} gap={18} color={dark}>10:12</Fit>
        <Fit w={16} gap={17} color={dark}>d</Fit>
        <Fit w={46} gap={29} mono color={brown}>Vol</Fit>
        <Fit w={97} gap={17} color={gray}>54,245</Fit>
        <Fit w={17} gap={59} mono color={brown}>O</Fit>
        <Fit w={64} gap={12} color={gray}>8150</Fit>
        <Fit w={18} color={pale}>B</Fit>
        <Fit w={17} gap={32} mono color={brown}>H</Fit>
        <Fit w={64} gap={12} color={gray}>8150</Fit>
        <Fit w={18} color={pale}>B</Fit>
        <Fit w={17} gap={32} mono color={brown}>L</Fit>
        <Fit w={64} gap={12} color={gray}>7950</Fit>
        <Fit w={18} color={pale}>B</Fit>
        <Fit w={48} gap={33} mono color={brown}>Val</Fit>
        <Fit w={131} gap={18} color={gray}>434.063M</Fit>
      </QuoteRow>

      <MenuBar>
        <SecurityField><Fit w={214}>RICHT HB Equity</Fit></SecurityField>
        <MenuItem $w={299} $pad={10}>
          <Fit w={27} color="#e4e4e4">94)</Fit><Fit w={217} gap={8}>Suggested Charts</Fit><Caret $gap={12} />
        </MenuItem>
        <MenuItem $w={168} $pad={9}>
          <Fit w={26} color="#e4e4e4">96)</Fit><Fit w={90} gap={9}>Actions</Fit><Caret $gap={12} />
        </MenuItem>
        <MenuItem $w={127} $pad={11}>
          <Fit w={26} color="#e4e4e4">97)</Fit><Fit w={48} gap={9}>Edit</Fit><Caret $gap={11} />
        </MenuItem>
        <Spacer />
        <MenuItem $w={315} $pad={20} $last><Fit w={276}>G elemzés 85: richter</Fit></MenuItem>
      </MenuBar>

      <FormRow>
        <Field $w={140} $pad={6}><Fit w={129}>11/20/2016</Fit></Field>
        <SideButton $w={21} $joined><Calendar /></SideButton>
        <Fit w={9} gap={7}>-</Fit>
        <Field $w={140} $gap={1} $pad={6}><Fit w={129}>08/29/2022</Fit></Field>
        <SideButton $w={22} $joined><Calendar /></SideButton>
        <SideButton $w={31} $gap={1} $bg="#999">
          <svg width="10" height="14" fill="none" stroke="#111" strokeWidth="1.6"><path d="M8 1L2 7L8 13" /></svg>
        </SideButton>
        <SideButton $w={30} $gap={1} $bg="#999">
          <svg width="10" height="14" fill="none" stroke="#111" strokeWidth="1.6"><path d="M2 1L8 7L2 13" /></svg>
        </SideButton>
        <Field $w={129} $gap={7}><Fit w={103}>Local CCY</Fit></Field>
        <SideButton $w={22} $joined><Caret $s={4} /></SideButton>
        <Spacer />
        <SideButton $w={48}><Turn color="#d0d0d0" /></SideButton>
        <SideButton $w={47} $joined><Turn color="#777" flip /></SideButton>
      </FormRow>
      <FormRow>
        <Fit w={60} gap={3}>Study</Fit>
        <Field $w={140} $gap={14}><Fit w={109}>Simple MA</Fit></Field>
        <SideButton $w={21} $joined><Caret $s={4} /></SideButton>
        <Fit w={70} gap={18}>Period</Fit>
        <Field $w={49} $gap={6} $pad={17}><Fit w={27}>20</Fit></Field>
        <Fit w={65} gap={18}>Offset</Fit>
        <Field $w={63} $gap={6} $pad={43}><Fit w={14}>0</Fit></Field>
        <IconSlot $w={24} $gap={20}><svg width="22" height="27" viewBox="0 -4 22 27" fill="#d2d2d2"><path d="M17 0L22 4.5L10 17L5.5 12.5ZM4.5 14L8.5 18L0 22Z" /></svg></IconSlot>
      </FormRow>

      <ToolRow>
        <Tool $w={53} $start><Fit w={22}>1D</Fit></Tool>
        <Tool $w={53}><Fit w={24}>3D</Fit></Tool>
        <Tool $w={53}><Fit w={25}>1M</Fit></Tool>
        <Tool $w={54}><Fit w={25}>6M</Fit></Tool>
        <Tool $w={64}><Fit w={35}>YTD</Fit></Tool>
        <Tool $w={51} $on><Fit w={22}>1Y</Fit></Tool>
        <Tool $w={52}><Fit w={23}>5Y</Fit></Tool>
        <Tool $w={65}><Fit w={37}>Max</Fit></Tool>
        <Tool $w={93} $start>
          <Fit w={48}>Daily</Fit><Caret $s={7} $gap={11} />
        </Tool>
        <ToolGap $w={7} />
        <Tool $w={38} $start>
          <svg width="22" height="18" fill="none" stroke="#d0d0d0" strokeWidth="2"><path d="M1 0V16H22M3 12L9 5L14 9L21 3" /></svg>
        </Tool>
        <Tool $w={38} $on>
          <svg width="14" height="20" fill="#d6d6d6"><path d="M0 4H5V15H0ZM2 0H3.6V20H2ZM8 9H13V16H8ZM10 5H11.6V20H10Z" /></svg>
        </Tool>
        <ToolGap $w={6} />
        <Tool $w={38} $start><Caret $s={4} $gap={5} /></Tool>
        <ToolGap $w={6} />
        <Tool $w={100} $start><Fit w={52}>Table</Fit></Tool>
        <ToolGap $w={386} />
        <AddData><Fit w={95} color="#6f5433">Add Data</Fit></AddData>
        <ToolGap $w={4} />
        <Tool $w={34} $start>
          <svg width="18" height="16" fill="none" stroke="#d0d0d0" strokeWidth="2.6"><path d="M8 1L2 8L8 15M16 1L10 8L16 15" /></svg>
        </Tool>
        <Tool $w={136} $start><Pencil size={17} /><Fit w={94} gap={8}>Edit Chart</Fit></Tool>
        <Tool $w={37}>
          <svg width="21" height="20" viewBox="0 0 21 20"><path d="M1 1H19V9L14 18H1Z" fill="#222" /><path d="M3 4H10M3 8H9M3 12H7" stroke="#bbb" strokeWidth="1.4" /><path d="M11 5L16 4L18 6L8 18M12 12L18 18M13 18H20" stroke="#fff" strokeWidth="2" fill="none" /><path d="M12 17.5H20V14" stroke="#222" strokeWidth="1.4" fill="none" /></svg>
        </Tool>
        <Tool $w={36}><Gear /></Tool>
      </ToolRow>

      <Pane $h={462}>
        <PriceChart />
        <Legend $x={54} $y={297} $w={247} $h={128} $pad="8px 0 0 17px">
          <LegendTree width="9" height="106" fill="none" stroke="#777">
            <rect x="0.5" y="0.5" width="6" height="6" /><path d="M2 3.5H5M4.5 7V101M4.5 21.5H7M4.5 37.5H7M4.5 53.5H7M4.5 69.5H7M4.5 85.5H7M4.5 100.5H7" />
          </LegendTree>
          {LEGEND.map(([mark, label, lw, value, vw]) => (
            <LegendRow key={label}>
              {MARKS[mark]
                ? <Mark width="12" height="13" fill="none" stroke="#777"><path d={MARKS[mark]} /></Mark>
                : <Swatch $c={mark} />}
              <Fit w={lw}>{label}</Fit>
              <Fit w={vw} gap={145 - lw}>{value}</Fit>
            </LegendRow>
          ))}
        </Legend>
      </Pane>
      <Splitter><Grip /></Splitter>
      <Pane $h={79}>
        <VolumeChart />
        <Legend $x={1458} $y={3} $w={144} $h={32} $pad="8px 0 0 7px">
          <LegendRow>
            <Expander $plus /><Swatch $c="#80ff00" $gap={3} /><Fit w={43}>Volume</Fit><Fit w={53} gap={6}>54245.00</Fit>
          </LegendRow>
        </Legend>
      </Pane>
      <Splitter><Grip /></Splitter>
      <Pane $h={153}>
        <MacdChart />
        <Legend $x={3} $y={3} $w={162} $h={64} $pad="8px 0 0 8px">
          <LegendRow><Fit w={56} gap={44}>RICHT HB</Fit></LegendRow>
          <LegendRow><Swatch $c="#000" /><Fit w={77}>MACD(12,26)</Fit><Fit w={46} gap={6}>49.9399</Fit></LegendRow>
          <LegendRow><Swatch $c="#f00" /><Fit w={39}>Sig(9)</Fit><Fit w={46} gap={44}>86.8757</Fit></LegendRow>
        </Legend>
      </Pane>
      <Footer>
        <FooterLine $pad={252}>Australia 61 2 9777 8600 Brazil 5511 2395 9000 Europe 44 20 7330 7500 Germany 49 69 9204 1210 Hong Kong 852 2977 6000</FooterLine>
        <FooterLine $pad={252}>{"Japan 81 3 4565 8900      Singapore 65 6212 1000      U.S. 1 212 318 2000       Copyright 2022 Bloomberg Finance L.P."}</FooterLine>
        <FooterLine $pad={1069}>SN 2160538 CEST GMT+2:00 G911-1676-173 29-Aug-2022 10:29:56</FooterLine>
      </Footer>
    </Screen>
  );
}
